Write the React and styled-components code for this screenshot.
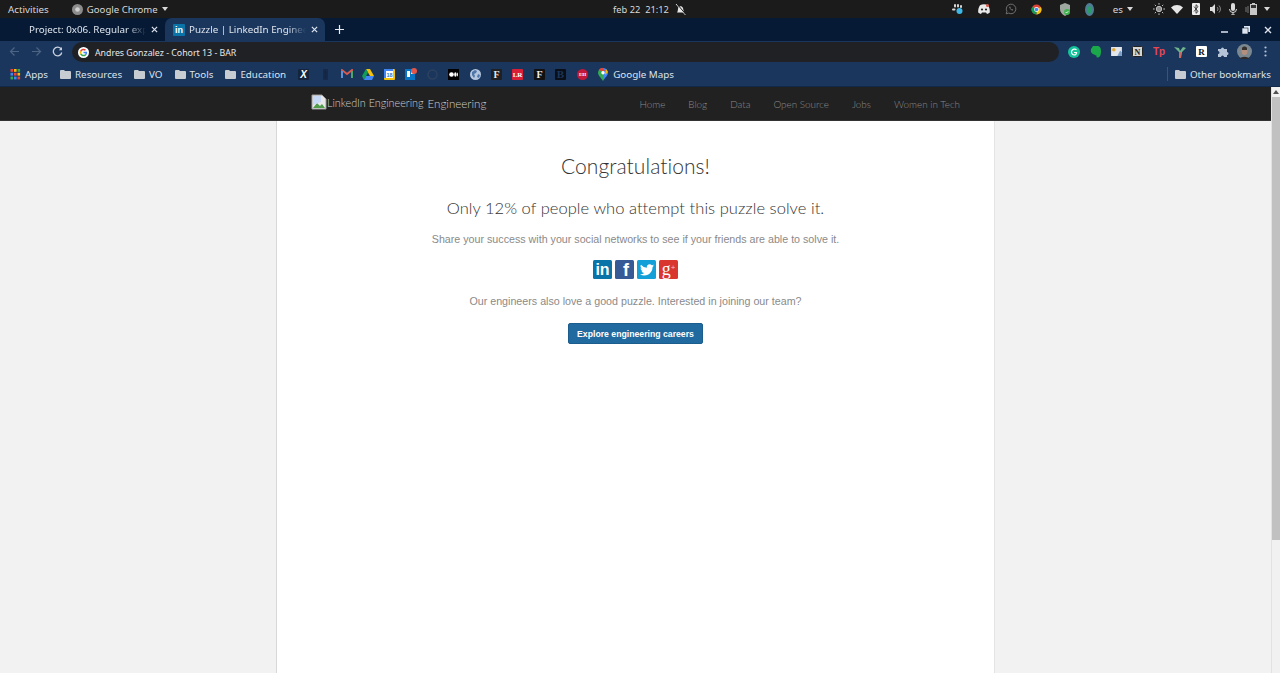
import React from "react";
import styled, { createGlobalStyle } from "styled-components";

const Global = createGlobalStyle`
  html, body { margin: 0; padding: 0; height: 673px; overflow: hidden; background: #f2f2f2; }
  #root { height: 673px; }
  * { box-sizing: border-box; }
`;
const Shell = styled.div`
  width: 1280px; height: 673px; display: flex; flex-direction: column; overflow: hidden;
  font-family: "Noto Sans", sans-serif;
`;
const TopBar = styled.div`
  height: 18px; flex: none; background: #1b1b1b; color: #d8d8d8; font-size: 9.8px;
  display: grid; grid-template-columns: 1fr auto 1fr; align-items: center; padding: 0 8px;
`;
const TopLeft = styled.div`display: flex; align-items: center;`;
const TopRight = styled.div`display: flex; align-items: center; justify-content: flex-end; padding-right: 2px;`;
const Clock = styled.div`display: flex; align-items: center; gap: 6px; white-space: pre; padding-left: 19px; font-size: 9.3px;`;
const Slot = styled.span`
  display: inline-flex; align-items: center; justify-content: center; flex: none;
  width: ${p => p.$w || 14}px; margin-left: ${p => p.$ml || 0}px;
`;
const AppName = styled.span`margin-left: 3px; font-size: 9.6px;`;
const Caret = styled.span`
  display: inline-block; width: 0; height: 0; margin-left: ${p => p.$ml || 4}px;
  border-left: 3.5px solid transparent; border-right: 3.5px solid transparent; border-top: 4px solid #d8d8d8;
`;
const Lang = styled.span`margin-left: 16px;`;
const TabStrip = styled.div`
  height: 23px; flex: none; background: #061a35; display: flex; align-items: flex-end;
`;
const Tab = styled.div`
  width: 160px; height: 23px; flex: none; display: flex; align-items: center; color: #dfe5ee; font-size: 9.8px;
  padding-left: ${p => p.$active ? 5 : 29}px; border-radius: 7px 7px 0 0;
  background: ${p => p.$active ? "#1a365d" : "transparent"};
  margin-left: ${p => p.$active ? 5 : 0}px;
`;
const TabTitle = styled.span`
  width: 117px; overflow: hidden; white-space: nowrap; flex: none;
  margin-left: ${p => p.$ml || 0}px;
  -webkit-mask-image: linear-gradient(to right, #000 84%, transparent);
  mask-image: linear-gradient(to right, #000 84%, transparent);
`;
const CloseX = styled.span`display: inline-flex; flex: none; margin-left: 4.5px;`;
const LinkedInFav = styled.span`
  width: 12px; height: 12px; margin-left: 3px; background: #0a74a8; color: #fff; flex: none; border-radius: 1px;
  display: flex; align-items: center; justify-content: center; font: bold 9px "Liberation Sans", sans-serif;
`;
const NewTab = styled.span`display: inline-flex; margin-left: 10px; align-self: center;`;
const WinControls = styled.div`
  margin-left: auto; display: flex; align-items: center; align-self: center; gap: 14px; padding-right: 8px;
`;
const Toolbar = styled.div`
  height: 21px; flex: none; background: #1a365d; display: flex; align-items: center; padding-left: 9px;
`;
const NavIcons = styled.div`display: flex; align-items: center; gap: 10.6px;`;
const Omnibox = styled.div`
  width: 987px; height: 20px; margin: 1px 0 0 8.8px; background: #202124; border-radius: 10px; flex: none;
  display: flex; align-items: center; padding: 1px 0 0 6px; color: #e6e7e9; font-size: 8.8px; gap: 6px;
`;
const ExtIcons = styled.div`
  display: grid; grid-template-columns: repeat(10, 21.3px); justify-items: center; align-items: center; margin-left: 4.3px;
`;
const Bookmarks = styled.div`
  height: 25px; flex: none; background: #1a365d; border-bottom: 1px solid #12294a; display: flex; align-items: center;
  padding-left: 10px; color: #dce3ec; font-size: 9.8px;
`;
const FolderGroup = styled.div`width: 283.3px; flex: none; display: flex; align-items: center; gap: 12px;`;
const Mark = styled.span`display: inline-flex; align-items: center; gap: 4px; flex: none;`;
const IconStrip = styled.div`
  display: grid; grid-template-columns: repeat(15, 21.4px); justify-items: center; align-items: center; flex: none;
`;
const MapsLabel = styled.span`margin-left: -1px; flex: none;`;
const Divider = styled.span`width: 1px; height: 14px; background: #3a5478; margin-left: auto; margin-right: 7px; flex: none;`;
const EndPad = styled.span`width: 9px; flex: none;`;
const Viewport = styled.div`flex: 1; display: flex; min-height: 0;`;
const Main = styled.div`flex: 1; display: flex; flex-direction: column; min-width: 0;`;
const SiteNav = styled.div`
  height: 34px; flex: none; background: #212121; border-bottom: 1px solid #333;
  display: flex; align-items: center; padding: 0 311px 0 311px; font-family: Lato, sans-serif; font-weight: 300;
`;
const Brand = styled.div`display: flex; align-items: center; color: #cfcfcf;`;
const BrandAlt = styled.span`display: inline-flex; align-items: center; margin-top: -3px; font-size: 10.8px;`;
const BrandName = styled.span`margin-left: 4px; font-size: 11.6px;`;
const NavLinks = styled.nav`margin-left: auto; display: flex; gap: 23px; color: #8a8a8a; font-size: 9.9px;`;
const Column = styled.div`
  width: 719px; flex: 1; margin-left: 276px; background: #fff; border-left: 1px solid #d8d8d8; border-right: 1px solid #e4e4e4;
  display: flex; flex-direction: column; align-items: center;
`;
const Heading = styled.h1`
  margin: 32px 0 0; font: 300 21px/26px Lato, sans-serif; color: #333; letter-spacing: .06px;
`;
const SubHeading = styled.h2`
  margin: 18px 0 0; font: 300 16.5px/22px Lato, sans-serif; color: #333; letter-spacing: .05px;
`;
const Copy = styled.p`
  margin: ${p => p.$mt}px 0 0; font: 400 10.7px/14px "Liberation Sans", sans-serif; color: #8a8a8a;
`;
const Share = styled.div`display: flex; gap: 3px; margin-top: 14px;`;
const ShareBtn = styled.span`
  width: 19px; height: 19px; border-radius: 1.5px; background: ${p => p.$bg}; color: #fff; display: flex;
  align-items: center; justify-content: center; overflow: hidden;
`;
const InLetter = styled.span`font: bold 16px/19px "Liberation Sans", sans-serif; color: #fff;`;
const FbLetter = styled.span`font: bold 18px/17px "Liberation Sans", sans-serif; color: #fff; margin: 2px 0 0 3px;`;
const GPlus = styled.span`font: 400 18px/17px "Liberation Serif", serif; color: #fff; display: flex; align-items: flex-start;`;
const Plus = styled.span`font: 400 8px/14px "Liberation Sans", sans-serif; color: #f3c4c0;`;
const Career = styled.button`
  width: 135px; height: 21px; margin-top: 15px; border: 1px solid #1b5e8e; border-radius: 2px; background: #206a9f; color: #fff;
  font: bold 8.7px "Liberation Sans", sans-serif; padding: 0;
`;
const Track = styled.div`width: 9px; flex: none; background: #f1f1f1; border-left: 1px solid #e2e2e2; display: flex; flex-direction: column;`;
const ThumbArrow = styled.div`height: 10px; flex: none; display: flex; justify-content: center; align-items: center;`;
const Thumb = styled.div`height: 443px; background: #c1c1c1; flex: none;`;

const X = ({ c = "#dfe5ee", s = 7 }) => (
  <svg width={s} height={s} viewBox="0 0 8 8"><path d="M1 1l6 6M7 1L1 7" stroke={c} strokeWidth="1.4" /></svg>
);
const GoogleG = ({ s = 12 }) => (
  <svg width={s} height={s} viewBox="0 0 24 24">
    <circle cx="12" cy="12" r="12" fill="#fff" />
    <path d="M20 12.200c0-.6 0-1.100-.2-1.700H12v3.200h4.500c-.2 1-.8 1.900-1.700 2.500l2.700 2.100c1.600-1.500 2.500-3.600 2.500-6.100z" fill="#4285f4" />
    <path d="M12 20.300c2.200 0 4.100-.7 5.500-2l-2.700-2.100c-.8.500-1.700.8-2.800.8-2.100 0-3.900-1.400-4.600-3.400L4.600 15.700c1.400 2.800 4.200 4.600 7.400 4.600z" fill="#34a853" />
    <path d="M7.400 13.600a5 5 0 010-3.200L4.600 8.300a8.300 8.300 0 000 7.400z" fill="#fbbc05" />
    <path d="M12 7c1.200 0 2.300.4 3.100 1.200l2.400-2.400A8.300 8.300 0 004.600 8.300l2.800 2.100C8.100 8.400 9.900 7 12 7z" fill="#ea4335" />
  </svg>
);
const ChromeLogo = ({ s = 12 }) => (
  <svg width={s} height={s} viewBox="0 0 24 24">
    <circle cx="12" cy="12" r="11" fill="#db4437" />
    <path d="M12 12L21.500 6.500A11 11 0 0112 23z" fill="#f4c20d" />
    <path d="M12 12L12 23A11 11 0 012.500 6.500z" fill="#0f9d58" />
    <circle cx="12" cy="12" r="5.200" fill="#fff" /><circle cx="12" cy="12" r="3.900" fill="#4285f4" />
  </svg>
);
const ChromeLogoGrey = () => (
  <svg width="11" height="11" viewBox="0 0 11 11"><circle cx="5.500" cy="5.500" r="5.500" fill="#8c8c8c" /><circle cx="5.500" cy="5.500" r="2.300" fill="#d0d0d0" /></svg>
);
const Folder = ({ c = "#c7ccd3" }) => (
  <svg width="11" height="9" viewBox="0 0 11 9"><path d="M0 1a1 1 0 011-1h3l1 1h5a1 1 0 011 1v6a1 1 0 01-1 1H1a1 1 0 01-1-1z" fill={c} /></svg>
);
const AppsGrid = () => (
  <svg width="11" height="11" viewBox="0 0 10 11">
    {["#ea4335","#fbbc05","#34a853","#4285f4","#ea4335","#fbbc05","#34a853","#4285f4","#ea4335"].map((c, i) => (
      <rect key={i} x={(i % 3) * 3.500} y={Math.floor(i / 3) * 3.800} width="2.600" height="2.800" fill={c} />
    ))}
  </svg>
);
const Tile = ({ bg, c = "#fff", t, f = "Liberation Serif", s = 9, w = 11, r = 1, h = 11, i }) => (
  <svg width={w} height={h} viewBox={`0 0 ${w} ${h}`}>
    <rect width={w} height={h} rx={r} fill={bg} />
    <text x={w / 2} y={h / 2 + s * .36} fontSize={s} fontWeight="700" fontStyle={i ? "italic" : "normal"} fontFamily={f} fill={c} textAnchor="middle">{t}</text>
  </svg>
);
const Gmail = () => (
  <svg width="12" height="10" viewBox="0 0 12 10">
    <path d="M1 9V1l5 4 5-4v8" fill="none" stroke="#d9594c" strokeWidth="1.800" />
    <path d="M1 9V2" stroke="#5b8fd6" strokeWidth="2" /><path d="M11 9V2" stroke="#4ea56b" strokeWidth="2" />
  </svg>
);
const Drive = () => (
  <svg width="12" height="11" viewBox="0 0 12 11">
    <path d="M4 0h4l4 7H8z" fill="#f4c20d" /><path d="M4 0l2 3.500L2 11 0 7z" fill="#0f9d58" /><path d="M4 7h8l-2 4H2z" fill="#4285f4" />
  </svg>
);
const Cal = () => (
  <svg width="11" height="11" viewBox="0 0 11 11">
    <rect width="11" height="11" rx="1" fill="#f4c20d" /><rect width="9" height="9" fill="#fff" />
    <rect width="9" height="2" fill="#4285f4" /><rect width="2" height="9" fill="#4285f4" />
    <text x="5.500" y="8" fontSize="5.500" fontWeight="700" fontFamily="Liberation Sans" fill="#3b6fc4" textAnchor="middle">18</text>
  </svg>
);
const Trello = () => (
  <svg width="12" height="12" viewBox="0 0 12 12">
    <rect y="1" width="10" height="11" fill="#0a74c4" /><rect x="2" y="3" width="3" height="6" fill="#fff" /><rect x="6" y="3" width="3" height="3" fill="#fff" />
    <circle cx="9" cy="3" r="3" fill="#e2564a" />
  </svg>
);
const Globe = () => (
  <svg width="11" height="11" viewBox="0 0 11 11">
    <circle cx="5.500" cy="5.500" r="5.500" fill="#b5c6de" />
    <path d="M2 3l3-2 2 1-1 2-2 1 1 2-1 2-2-3z M8 5l2 1-1 3-2-1z" fill="#4f76a8" />
  </svg>
);
const MapsPin = () => (
  <svg width="10" height="13" viewBox="0 0 10 13">
    <path d="M5 13C3 9.500 0 7.500 0 4.700A5 5 0 015 0z" fill="#34a853" />
    <path d="M5 0a5 5 0 015 4.700c0 2.800-3 4.800-5 8.300z" fill="#4285f4" />
    <path d="M1 1.500A5 5 0 015 0l2 3H3z" fill="#ea4335" /><path d="M8 1l2 3-3 3z" fill="#fbbc05" />
    <circle cx="5" cy="4.800" r="1.700" fill="#fff" />
  </svg>
);
const Medium = () => (
  <svg width="11" height="11" viewBox="0 0 11 11"><rect width="11" height="11" fill="#000" />
    <circle cx="3.500" cy="5.500" r="2.300" fill="#fff" /><ellipse cx="7.400" cy="5.500" rx="1.200" ry="2.200" fill="#fff" /><ellipse cx="9.400" cy="5.500" rx=".5" ry="2" fill="#fff" /></svg>
);
const Slack = () => (
  <svg width="12" height="12" viewBox="0 0 12 12">
    <circle cx="7.500" cy="8" r="3" fill="#3db8e8" /><rect x="2" y="1" width="2" height="3.500" rx="1" fill="#d7d7d7" /><rect x="5" y="1" width="2" height="3.500" rx="1" fill="#d7d7d7" /><rect x="0" y="5.500" width="3.500" height="2" rx="1" fill="#d7d7d7" /><rect x="8" y="2" width="2" height="3" rx="1" fill="#d7d7d7" />
  </svg>
);
const Discord = () => (
  <svg width="12" height="10" viewBox="0 0 12 10">
    <path d="M2 1.200C4.500 0 7.500 0 10 1.200 11.500 3.500 12 6 11.800 8.500 10.800 9.300 9.800 9.700 9 10L8 8.500H4L3 10c-.8-.3-1.800-.7-2.800-1.500C0 6 .5 3.500 2 1.200z" fill="#e9e9e9" />
    <circle cx="4" cy="5.500" r="1.100" fill="#222" /><circle cx="8" cy="5.500" r="1.100" fill="#222" />
    <circle cx="9.500" cy="1.500" r="1.500" fill="#e2564a" />
  </svg>
);
const Whats = () => (
  <svg width="12" height="12" viewBox="0 0 12 12" fill="none">
    <path d="M1.200 10.800l.7-2.500a4.800 4.800 0 111.800 1.800z" stroke="#777" strokeWidth=".9" />
    <path d="M4.300 3.800c-.5.800 1.500 3.800 3.500 3.800l.5-.9-1.200-.6-.5.400-1.300-1.300.4-.6-.5-1.100z" fill="#777" />
  </svg>
);
const Shield = () => (
  <svg width="12" height="13" viewBox="0 0 12 13">
    <path d="M6 0l5 2v4c0 3-2 5.500-5 7-3-1.500-5-4-5-7V2z" fill="#9fa8a0" />
    <circle cx="8" cy="9" r="3" fill="#3fb24f" /><path d="M6.600 9l1 1 1.700-1.800" stroke="#fff" strokeWidth=".8" fill="none" />
  </svg>
);
const Oval = () => (
  <svg width="9" height="13" viewBox="0 0 9 13"><ellipse cx="4.500" cy="6.500" rx="4.500" ry="6.500" fill="#4e7e96" /><ellipse cx="4.500" cy="7" rx="2.500" ry="3.500" fill="#2c9b6a" /></svg>
);
const Brightness = () => (
  <svg width="12" height="12" viewBox="0 0 12 12" stroke="#bdbdbd" strokeWidth="1">
    <circle cx="6" cy="6" r="2.700" fill="#8f8f8f" />
    <path d="M6 0v1.700M6 10.300V12M0 6h1.700M10.300 6H12M1.800 1.800L3 3M9 9l1.200 1.200M1.800 10.200L3 9M9 3l1.200-1.200" />
  </svg>
);
const Wifi = () => (<svg width="12" height="9" viewBox="0 0 12 9"><path d="M0 2.500C3.500-.8 8.500-.8 12 2.500L6 9z" fill="#e6e6e6" /></svg>);
const BT = () => (
  <svg width="8" height="12" viewBox="0 0 8 12"><rect width="8" height="12" rx="1" fill="#eee" /><path d="M2 3.500l4 5-2 1.800V1.700l2 1.800-4 5" stroke="#222" strokeWidth=".8" fill="none" /></svg>
);
const Speaker = () => (
  <svg width="11" height="10" viewBox="0 0 11 10" fill="none"><path d="M0 3h2l3-3v10L2 7H0z" fill="#dcdcdc" /><path d="M7 3a2.500 2.500 0 010 4M9 1.500a5 5 0 010 7" stroke="#888" /></svg>
);
const Mic = () => (
  <svg width="8" height="12" viewBox="0 0 8 12"><rect x="2" width="4" height="8" rx="2" fill="#dcdcdc" /><path d="M.5 6a3.500 3.500 0 007 0M4 9.500V12M2 12h4" stroke="#dcdcdc" fill="none" /></svg>
);
const Battery = () => (
  <svg width="14" height="12" viewBox="0 0 14 12">
    <rect x="5" y="1" width="7" height="11" fill="#c8c8c8" /><rect x="7" width="3" height="1" fill="#c8c8c8" />
    <rect x="6" y="2" width="5" height="3" fill="#333" /><path d="M1 4v5M3 3v7" stroke="#777" />
  </svg>
);
const BellOff = () => (
  <svg width="11" height="11" viewBox="0 0 11 11">
    <path d="M2 8.500c1-1.500.8-3 1.200-4.500C4 1.800 7 1.800 8 4c.4 1.500.5 3 1.500 4.500z" fill="#e6e6e6" /><path d="M1 0l9.500 11" stroke="#e6e6e6" /><path d="M2 0l9 10.500" stroke="#1b1b1b" />
  </svg>
);
const Grammarly = () => (
  <svg width="12" height="12" viewBox="0 0 12 12"><circle cx="6" cy="6" r="6" fill="#15c39a" /><path d="M8.500 3.800A3 3 0 106 9c1.500 0 2.500-1 2.500-2.500H6" stroke="#fff" strokeWidth="1.200" fill="none" /></svg>
);
const Elephant = () => (
  <svg width="11" height="12" viewBox="0 0 11 12"><path d="M1 3l2-3h4c3 0 4 2 4 5 0 3-.5 6-3 6.500-2 .3-2-1.500-1-1.500L5 9C3 8 0 7 1 3z" fill="#1aa84a" /></svg>
);
const Photos = () => (
  <svg width="11" height="9" viewBox="0 0 12 10"><rect width="12" height="10" fill="#e3e6ea" /><circle cx="3" cy="3" r="2" fill="#e0a93b" /><path d="M7 10l3-6 2 2v4z" fill="#7b9ec5" /></svg>
);
const Notion = () => (
  <svg width="11" height="11" viewBox="0 0 11 11"><rect x=".5" y=".5" width="10" height="10" rx="1" fill="#d6d6d6" stroke="#222" />
    <text x="5.500" y="8.500" fontSize="8" fontFamily="Liberation Serif" fontWeight="700" fill="#222" textAnchor="middle">N</text></svg>
);
const Tree = () => (
  <svg width="12" height="12" viewBox="0 0 12 12"><path d="M0 1l5 1 1 3 3-4 3 1-4 4-1 6H5V6z" fill="#6fb58c" /><path d="M5 6h2v6H5z" fill="#c96b5d" /></svg>
);
const Puzzle = () => (
  <svg width="11" height="11" viewBox="0 0 11 11"><path d="M0 3h3a1.500 1.500 0 013 0h3v3a1.500 1.500 0 010 3v2H6a1.500 1.500 0 00-3 0H0V8a1.500 1.500 0 000-3z" fill="#b6c4d7" /></svg>
);
const Avatar = () => (
  <svg width="15" height="15" viewBox="0 0 15 15"><circle cx="7.500" cy="7.500" r="7.500" fill="#7b8890" /><ellipse cx="7.500" cy="7" rx="3" ry="4" fill="#b58f7d" /><path d="M3 15c1-3 8-3 9 0z" fill="#2f2a28" /><path d="M5 4c1-2 4-2 5 0v2H5z" fill="#35302c" /></svg>
);
const Dots = () => (
  <svg width="3" height="11" viewBox="0 0 3 11" fill="#b6c4d7"><circle cx="1.500" cy="1.500" r="1.100" /><circle cx="1.500" cy="5.500" r="1.100" /><circle cx="1.500" cy="9.500" r="1.100" /></svg>
);
const Arrow = ({ c, d }) => (
  <svg width="11" height="11" viewBox="0 0 11 11" fill="none" stroke={c} strokeWidth="1.200"><path d={d} /></svg>
);
const Reload = () => (
  <svg width="11" height="11" viewBox="0 0 11 11" fill="none" stroke="#c7d0dd" strokeWidth="1.300">
    <path d="M9.500 3.500A4.300 4.300 0 105.500 9.800a4.300 4.300 0 004.200-3.300" />
    <path d="M10 1v3.200H6.800z" fill="#c7d0dd" stroke="none" />
  </svg>
);
const Broken = () => (
  <svg width="16" height="16" viewBox="0 0 16 16">
    <path d="M1 1h10l4 4v10H1z" fill="#e8e8e8" stroke="#9a9a9a" /><path d="M2 14l4-5 3 3 2-2 3 4z" fill="#4f9d4a" /><path d="M2 2h8v6L2 11z" fill="#c5d8f5" />
  </svg>
);

const NAV = ["Home", "Blog", "Data", "Open Source", "Jobs", "Women in Tech"];

export default function App() {
  return (
    <Shell>
      <Global />
      <TopBar>
        <TopLeft>
          <span>Activities</span>
          <Slot $w={12} $ml={23}><ChromeLogoGrey /></Slot>
          <AppName>Google Chrome</AppName><Caret />
        </TopLeft>
        <Clock>feb 22  21:12<BellOff /></Clock>
        <TopRight>
          <Slot><Slack /></Slot>
          <Slot $ml={12}><Discord /></Slot>
          <Slot $ml={13}><Whats /></Slot>
          <Slot $ml={12}><ChromeLogo s={11} /></Slot>
          <Slot $ml={14}><Shield /></Slot>
          <Slot $ml={11}><Oval /></Slot>
          <Lang>es</Lang><Caret />
          <Slot $ml={19}><Brightness /></Slot>
          <Slot $ml={4}><Wifi /></Slot>
          <Slot $ml={5}><BT /></Slot>
          <Slot $ml={5}><Speaker /></Slot>
          <Slot $ml={4}><Mic /></Slot>
          <Slot $ml={5}><Battery /></Slot>
          <Caret $ml={5} />
        </TopRight>
      </TopBar>
      <TabStrip>
        <Tab>
          <TabTitle>Project: 0x06. Regular exp</TabTitle>
          <CloseX><X /></CloseX>
        </Tab>
        <Tab $active>
          <LinkedInFav>in</LinkedInFav>
          <TabTitle $ml={4}>Puzzle | LinkedIn Enginee</TabTitle>
          <CloseX><X /></CloseX>
        </Tab>
        <NewTab><svg width="9" height="9" viewBox="0 0 9 9"><path d="M4.500 0v9M0 4.500h9" stroke="#e8edf3" strokeWidth="1.200" /></svg></NewTab>
        <WinControls>
          <svg width="7" height="7" viewBox="0 0 7 7"><path d="M0 6h7" stroke="#dfe5ee" strokeWidth="1.500" /></svg>
          <svg width="8" height="8" viewBox="0 0 8 8"><rect x="2" width="6" height="6" fill="#dfe5ee" /><rect y="2" width="6" height="6" fill="#dfe5ee" stroke="#061a35" strokeWidth=".6" /></svg>
          <X s={8} />
        </WinControls>
      </TabStrip>
      <Toolbar>
        <NavIcons>
          <Arrow c="#4c6484" d="M10 5.500H1.500M5.500 1.500l-4 4 4 4" />
          <Arrow c="#4c6484" d="M1 5.500h8.500M5.500 1.500l4 4-4 4" />
          <Reload />
        </NavIcons>
        <Omnibox><GoogleG s={11} /><span>Andres Gonzalez - Cohort 13 - BAR</span></Omnibox>
        <ExtIcons>
          <Grammarly />
          <Elephant />
          <Photos />
          <Notion />
          <Tile bg="transparent" c="#e84855" t="Tp" f="Liberation Sans" s={10} w={14} />
          <Tree />
          <Tile bg="#fff" c="#111" t="R" s={9} />
          <Puzzle />
          <Avatar />
          <Dots />
        </ExtIcons>
      </Toolbar>
      <Bookmarks>
        <FolderGroup>
          <Mark><AppsGrid />Apps</Mark>
          <Mark><Folder />Resources</Mark>
          <Mark><Folder />VO</Mark>
          <Mark><Folder />Tools</Mark>
          <Mark><Folder />Education</Mark>
        </FolderGroup>
        <IconStrip>
          <Tile bg="#14243c" c="#fff" t="X" s={10} f="Liberation Sans" i />
          <Tile bg="#16294a" c="#16233a" t="!" s={10} w={5} />
          <Gmail />
          <Drive />
          <Cal />
          <Trello />
          <svg width="11" height="11" viewBox="0 0 11 11"><circle cx="5.500" cy="5.500" r="4.500" fill="none" stroke="#2c415f" strokeWidth="1.500" /></svg>
          <Medium />
          <Globe />
          <Tile bg="#1f2023" c="#e8e8e8" t="F" s={10} />
          <Tile bg="#d81f36" c="#fff" t="LR" s={7} />
          <Tile bg="#111" c="#eee" t="F" s={10} />
          <Tile bg="#0a0e16" c="#1a365d" t="B" s={11} />
          <Tile bg="#c2183a" c="#fff" t="EH" s={5} r={5.500} />
          <MapsPin />
        </IconStrip>
        <MapsLabel>Google Maps</MapsLabel>
        <Divider />
        <Mark><Folder />Other bookmarks</Mark>
        <EndPad />
      </Bookmarks>
      <Viewport>
        <Main>
          <SiteNav>
            <Brand>
              <BrandAlt><Broken />LinkedIn Engineering</BrandAlt>
              <BrandName>Engineering</BrandName>
            </Brand>
            <NavLinks>{NAV.map(n => <span key={n}>{n}</span>)}</NavLinks>
          </SiteNav>
          <Column>
            <Heading>Congratulations!</Heading>
            <SubHeading>Only 12% of people who attempt this puzzle solve it.</SubHeading>
            <Copy $mt={13}>Share your success with your social networks to see if your friends are able to solve it.</Copy>
            <Share>
              <ShareBtn $bg="#0a74a8"><InLetter>in</InLetter></ShareBtn>
              <ShareBtn $bg="#365a96"><FbLetter>f</FbLetter></ShareBtn>
              <ShareBtn $bg="#13a0d8">
                <svg width="14" height="12" viewBox="0 0 24 20"><path d="M24 2.400c-.9.400-1.800.7-2.800.8 1-.6 1.800-1.600 2.200-2.700-1 .6-2 1-3.100 1.200A4.900 4.900 0 0011.900 6.200 14 14 0 011.700.9a4.900 4.900 0 001.500 6.600c-.8 0-1.600-.2-2.200-.6 0 2.400 1.700 4.400 3.900 4.900-.7.200-1.500.2-2.200.1.600 2 2.400 3.400 4.600 3.400A9.900 9.900 0 010 17.300 14 14 0 007.500 19.500c9.100 0 14.300-7.700 14-14.600 1-.7 1.800-1.500 2.500-2.500z" fill="#fff" /></svg>
              </ShareBtn>
              <ShareBtn $bg="#d9362f"><GPlus>g<Plus>+</Plus></GPlus></ShareBtn>
            </Share>
            <Copy $mt={15}>Our engineers also love a good puzzle. Interested in joining our team?</Copy>
            <Career>Explore engineering careers</Career>
          </Column>
        </Main>
        <Track>
          <ThumbArrow><svg width="6" height="4" viewBox="0 0 6 4"><path d="M3 0l3 4H0z" fill="#505050" /></svg></ThumbArrow>
          <Thumb />
        </Track>
      </Viewport>
    </Shell>
  );
}
